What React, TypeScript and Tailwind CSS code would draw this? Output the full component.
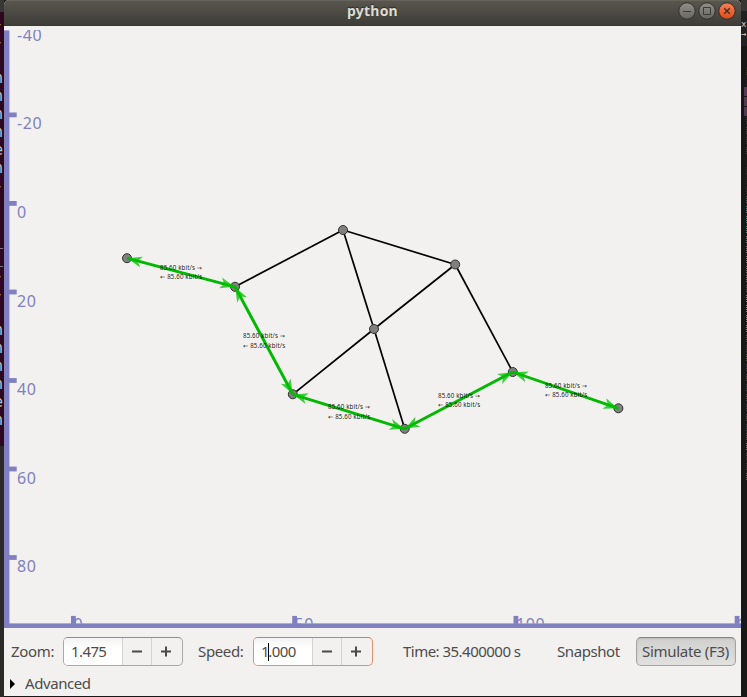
import React from "react";

type Point = [number, number];

const nodes: Point[] = [
  [127, 258.2],
  [235, 286.8],
  [343, 230],
  [455.2, 264.5],
  [374, 329],
  [292.8, 394.3],
  [404.7, 428.8],
  [512.8, 372],
  [618.4, 408.3],
];

const links: Point[] = [[1, 2], [2, 3], [2, 4], [3, 4], [4, 5], [4, 6], [3, 7]];
const flows: Point[] = [[0, 1], [1, 5], [5, 6], [6, 7], [7, 8]];

const rates: Point[] = [
  [160, 270.2],
  [243, 338.2],
  [328, 409.2],
  [438, 398.2],
  [545, 388.2],
];
const rateGap = [9, 10, 10, 9, 9];

const yTicks = [
  { y: 114.8, label: "-20" },
  { y: 203.3, label: "0" },
  { y: 291.9, label: "20" },
  { y: 380.4, label: "40" },
  { y: 468.9, label: "60" },
  { y: 557.4, label: "80" },
];
const xTicks = [
  { x: 73.4, label: "0" },
  { x: 294.6, label: "50" },
  { x: 515.9, label: "100" },
  { x: 737.1, label: "150" },
];

function Arrow({ from, to }: { from: Point; to: Point }) {
  const angle = (Math.atan2(to[1] - from[1], to[0] - from[0]) * 180) / Math.PI;
  return (
    <path
      d="M-0.5 0 L-15 -5.6 L-11 0 L-15 5.6 Z"
      fill="#00c000"
      fillOpacity="0.75"
      transform={`translate(${to[0]} ${to[1]}) rotate(${angle})`}
    />
  );
}

function NetworkCanvas() {
  return (
    <svg className="block h-[602px] w-[737px] shrink-0" viewBox="4 26 737 602" fontFamily="'Noto Sans', sans-serif">
      <defs>
        <clipPath id="plot">
          <rect x="4" y="30" width="737" height="593.5" />
        </clipPath>
      </defs>
      <g fill="none" stroke="#000" strokeWidth="1.7">
        {links.map(([a, b]) => (
          <line key={`${a}-${b}`} x1={nodes[a][0]} y1={nodes[a][1]} x2={nodes[b][0]} y2={nodes[b][1]} />
        ))}
      </g>
      {nodes.map(([x, y]) => (
        <circle key={x} cx={x} cy={y} r="4.5" fill="#808080" stroke="#333" strokeWidth="1" />
      ))}
      {flows.map(([a, b]) => (
        <g key={`${a}-${b}`}>
          <line x1={nodes[a][0]} y1={nodes[a][1]} x2={nodes[b][0]} y2={nodes[b][1]} stroke="#00b900" strokeWidth="2.9" />
          <Arrow from={nodes[a]} to={nodes[b]} />
          <Arrow from={nodes[b]} to={nodes[a]} />
        </g>
      ))}
      {rates.map(([x, y], i) => (
        <g key={x} fontSize="6.2" fill="#000" fillOpacity="0.9">
          <text x={x} y={y} textLength="35">85.60 kbit/s</text>
          <text x={x + 36.8} y={y} fontFamily="'DejaVu Sans', sans-serif">→</text>
          <text x={x} y={y + rateGap[i]} fontFamily="'DejaVu Sans', sans-serif">←</text>
          <text x={x + 7.2} y={y + rateGap[i]} textLength="35">85.60 kbit/s</text>
        </g>
      ))}
      <g fill="#8080c0">
        <rect x="4" y="30.4" width="5.4" height="593.6" />
        <rect x="4" y="623.4" width="737" height="4.6" />
        {yTicks.map(({ y }) => (
          <rect key={y} x="9" y={y - 2.3} width="7.7" height="4.8" />
        ))}
        {xTicks.map(({ x }) => (
          <rect key={x} x={x - 2.4} y="615.9" width="4.8" height="8" />
        ))}
        <g clipPath="url(#plot)" fontSize="16" letterSpacing="0.6">
          <text x="17" y="41">-40</text>
          {yTicks.map(({ y, label }) => (
            <text key={y} x="17" y={y + 14.65}>{label}</text>
          ))}
          {xTicks.map(({ x, label }) => (
            <text key={x} x={x} y="629.6">{label}</text>
          ))}
        </g>
      </g>
    </svg>
  );
}

function SpinBox({ children, focused = false }: { children: React.ReactNode; focused?: boolean }) {
  return (
    <div
      className={
        focused
          ? "flex h-[29px] w-[120px] shrink-0 overflow-hidden rounded-[5px] border border-[#e0916f] border-t-[#d9795a]"
          : "flex h-[29px] w-[120px] shrink-0 overflow-hidden rounded-[5px] border border-[#aaa8a5] border-t-[#8f8e8b]"
      }
    >
      <div className="flex w-[59px] items-center border-r border-[#d5d3d1] bg-linear-to-b from-[#f3f3f3] to-white to-40% pl-[7px] tracking-[-0.4px]">
        {children}
      </div>
      <div className="flex w-[29px] items-center justify-center border-r border-[#d5d3d1]">
        <svg className="h-3 w-3" viewBox="0 0 12 12"><path d="M1 5.5H11" stroke="#4a4a4a" strokeWidth="2" /></svg>
      </div>
      <div className="flex flex-1 items-center justify-center pr-0.5">
        <svg className="h-3 w-3" viewBox="0 0 12 12"><path d="M1 5.5H11M6 .5V10.5" stroke="#4a4a4a" strokeWidth="2" /></svg>
      </div>
    </div>
  );
}

const terminalRows = ["-", "-", " ", "n", "n", "n", "n", "e", "n", "-", " ", " ", "_", "_", "-", "-", " ", "n", "n", "n", "n", "e", "n"];

const editorMarks = [
  "#353a20", "#252525", "#553a55", "#553a55", "#553a55", "#303b48", "#285b75", "#254b61", "#444d50",
  "#202020", "#30343a", "#20262a", "#303438", "#52635b", "#3d8a7c", "#3d8a7c", "#3d8a7c", "#697d75",
  "#777", "#777", "#777", "#777", "#555", "#8b8b83", "#8b8b83", "#8b8b83", "#8b8b83", "#565b50",
  "#404a4c", "#596052", "#454b4d", "#555", "#454b4d", "#555", "#454b4d", "#555", "#454b4d", "#4a504b",
  "#777b65", "#42524b", "#344343", "#3d7060",
];

function TerminalEdge() {
  return (
    <div className="flex w-1 shrink-0 flex-col overflow-hidden bg-[#2c2a27]">
      <div className="h-3 shrink-0 bg-[#393733]" />
      <div className="h-[434px] shrink-0 overflow-hidden bg-[#2c071f] pt-[3px]">
        {terminalRows.map((letter, i) => (
          <div key={i} className="-ml-[6px] h-[18px] w-3 font-['DejaVu_Sans_Mono',monospace] text-[15px]/[18px] text-[#b5c8cb]">
            {letter}
          </div>
        ))}
      </div>
    </div>
  );
}

function EditorEdge() {
  return (
    <div className="flex w-1.5 shrink-0 flex-col overflow-hidden bg-[#171817]">
      <div className="h-[11px] shrink-0 bg-[#373632]" />
      <div className="flex h-[35px] shrink-0 flex-col bg-[#222] pt-2 font-['DejaVu_Sans_Mono',monospace] text-[9px]/[10px] text-[#ccc]">
        <span>x</span>
        <span>→</span>
      </div>
      <div className="ml-[3px] mt-[22px] flex h-[412px] shrink-0 flex-col justify-between">
        {editorMarks.map((color, i) => (
          <div
            key={i}
            className={i > 1 && i < 5 ? "-my-px h-[9px] shrink-0" : "ml-[2px] h-[7px] shrink-0 border-l border-dotted"}
            style={i > 1 && i < 5 ? { backgroundColor: color } : { borderColor: color }}
          />
        ))}
      </div>
    </div>
  );
}

export default function App() {
  return (
    <div className="flex h-[697px] w-[747px] overflow-hidden bg-[#171817] font-['Noto_Sans',sans-serif] text-[15px] text-[#4c4c4c]">
      <TerminalEdge />
      <main className="flex h-[696px] w-[737px] shrink-0 flex-col overflow-hidden rounded-t-[5px] bg-[#f2f1ef]">
        <header className="flex h-[26px] shrink-0 items-start border-t border-[#66635a] border-b border-b-[#393832] bg-linear-to-b from-[#59564d] to-[#3e3d38] pr-1">
          <div className="w-[64px]" />
          <h1 className="flex-1 text-center text-[14px] leading-5 font-bold tracking-[0.2px] text-[#dfdbd2] [text-shadow:0_-1px_1px_#292824]">python</h1>
          <svg className="h-5 w-[60px]" viewBox="677 1 60 20">
            <defs>
              <linearGradient id="gray" x2="0" y2="1"><stop stopColor="#918f89" /><stop offset="1" stopColor="#67665f" /></linearGradient>
              <linearGradient id="orange" x2="0" y2="1"><stop stopColor="#f58259" /><stop offset="1" stopColor="#df4a16" /></linearGradient>
            </defs>
            <g stroke="#32312d">
              <circle cx="687" cy="11" r="8.2" fill="url(#gray)" />
              <circle cx="707" cy="11" r="8.2" fill="url(#gray)" />
              <circle cx="727" cy="11" r="8.2" fill="url(#orange)" />
            </g>
            <path d="M683 11.5H691M703.5 7.5H710.5V14.5H703.5Z" fill="none" stroke="#3b3a35" />
            <path d="M724.2 8.3L729.8 13.8M729.8 8.3L724.2 13.8" stroke="#4b2919" strokeWidth="1.4" />
          </svg>
        </header>
        <NetworkCanvas />
        <div className="flex h-[47px] shrink-0 items-center pr-[5px] pl-[7px] whitespace-nowrap">
          <span className="w-[52px] tracking-[-0.3px]">Zoom:</span>
          <SpinBox><span className="tracking-[-0.6px]">1.475</span></SpinBox>
          <span className="ml-[15px] w-[55px] tracking-[-0.35px]">Speed:</span>
          <SpinBox focused>1<span className="-mx-px h-[18px] w-px bg-black" /><span className="tracking-[-0.5px]">.000</span></SpinBox>
          <span className="ml-[30px] w-[118px] tracking-[-0.52px]">Time: 35.400000 s</span>
          <span className="ml-9 w-[63px] tracking-[-0.42px]">Snapshot</span>
          <button className="ml-4 h-[29px] w-[100px] shrink-0 rounded-[5px] border border-[#a5a4a2] border-t-[#858481] bg-linear-to-b from-[#d0d0cf] to-[#e1e1e0] pr-px tracking-[-0.3px] shadow-[inset_0_1px_2px_#bbb]">Simulate (F3)</button>
        </div>
        <div className="-mt-[2px] flex h-[21px] shrink-0 items-center pl-1.5">
          <svg className="mr-[10px] h-[10px] w-[5px]" viewBox="0 0 5 10"><path d="M0 0L5 5L0 10Z" fill="#000" /></svg>
          <span className="tracking-[-0.42px]">Advanced</span>
        </div>
      </main>
      <EditorEdge />
    </div>
  );
}
